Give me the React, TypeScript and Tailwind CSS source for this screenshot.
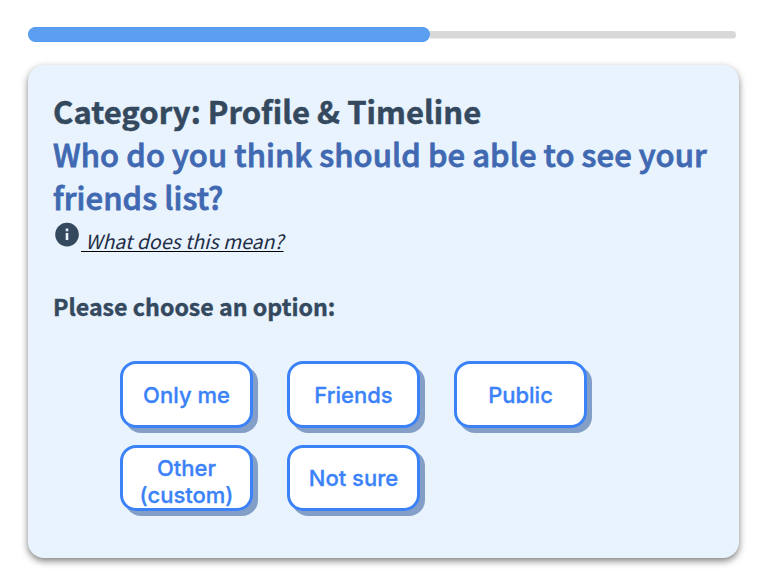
import React from "react";

const options: string[] = ["Only me", "Friends", "Public", "Other (custom)", "Not sure"];

function InfoIcon() {
  return (
    <svg className="mt-[3px] ml-px h-[26px] w-[26px] shrink-0" viewBox="0 0 26 26">
      <circle cx="13" cy="12.600" r="11.800" fill="#34495e" />
      <path d="M11.700 6.600h2.600v2.600h-2.600zM11.700 11.100h2.600v7h-2.600z" fill="#e8f2fd" />
    </svg>
  );
}

export default function App() {
  return (
    <div className="h-[574px] w-[760px] overflow-hidden bg-white pt-[27px] pl-[28px] font-['Noto_Sans_CJK_SC',sans-serif] text-[#34495e]">
      <div className="flex h-[15px] w-[708px] items-center">
        <div className="h-[15px] w-[402px] shrink-0 rounded-full border-y border-[#4f9aee] bg-[#5c9ff0]" />
        <div className="-ml-[5px] h-[8px] grow rounded-r-full bg-[#d8d8d8] [clip-path:inset(0_0_0_5px)]" />
      </div>
      <main className="mt-[23px] h-[493px] w-[711px] rounded-[16px] bg-[#e8f3fe] pt-[24px] pl-[25px] shadow-[0_3px_7px_rgba(0,0,0,0.5)]">
        <h1 className="h-[43px] text-[31px] leading-[43px] font-bold tracking-[0.05px] whitespace-nowrap [-webkit-text-stroke:0.5px_#34495e]">Category: Profile &amp; Timeline</h1>
        <h2 className="h-[87px] text-[31px] leading-[43px] font-medium tracking-[0.07px] whitespace-nowrap text-[#4169b2] [-webkit-text-stroke:0.8px_#4169b2]">
          Who do you think should be able to see your
          <br />
          friends list?
        </h2>
        <div className="flex h-[36px]">
          <InfoIcon />
          <a className="mt-[8px] ml-px text-[19.500px] leading-[28px] whitespace-pre text-[#1f2d45] italic underline decoration-black decoration-1 underline-offset-[2px]"> What does this mean?</a>
        </div>
        <p className="mt-[33px] h-[36px] text-[23.200px] leading-[36px] font-bold [-webkit-text-stroke:0.4px_#34495e]">Please choose an option:</p>
        <div className="mt-[27px] ml-[67px] grid w-[467px] grid-cols-[repeat(3,133px)] gap-x-[34px] gap-y-[17px] pt-[10px]">
          {options.map((label) => (
            <button
              key={label}
              className="flex h-[66.500px] w-[133px] items-center justify-center rounded-[16px] border-[3px] border-[#3b82f8] bg-white px-[10px] text-center font-[Inter,sans-serif] text-[22px] leading-[27px] font-medium text-[#3b82f8] shadow-[5px_5px_0_#849fc7] [-webkit-text-stroke:0.3px_#3b82f8]"
            >
              <span className={label.startsWith("Other") ? "pt-[9px]" : "pt-[2px]"}>{label}</span>
            </button>
          ))}
        </div>
      </main>
    </div>
  );
}
